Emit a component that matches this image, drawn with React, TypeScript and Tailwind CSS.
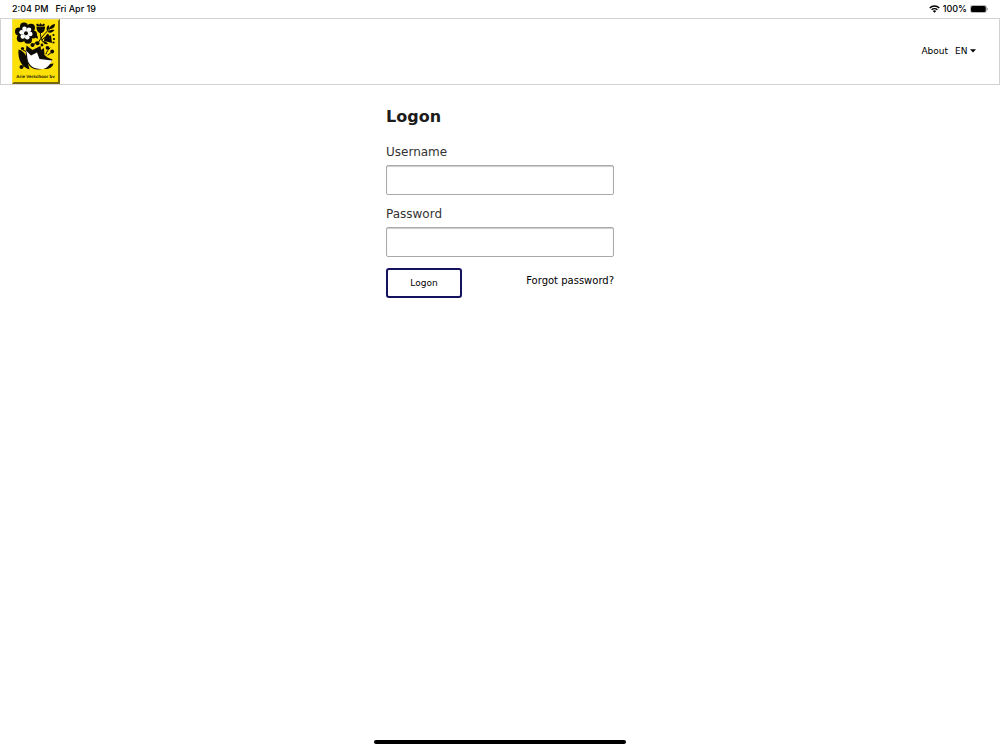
import { useState } from "react";

function Logo() {
  return (
    <svg viewBox="0 0 48 65" className="h-[65px] w-12" role="img" aria-label="Arie Verschoor bv">
      <rect width="48" height="65" fill="#a08c10" />
      <path d="M0 0h48l-2 2H2v61l-2 2z" fill="#f3e04a" />
      <rect x="1" y="1" width="45" height="62" fill="#fde005" />
      <path d="M0 65l2-2h44V2l2-2v65z" fill="#75660f" />
      <g fill="#0d0b04">
        <circle cx="12" cy="7.500" r="4" />
        <circle cx="19" cy="8.800" r="4" />
        <circle cx="21" cy="15.500" r="4" />
        <circle cx="16" cy="20.700" r="4" />
        <circle cx="8.800" cy="19.300" r="4" />
        <circle cx="7" cy="12.500" r="4" />
        <circle cx="14" cy="14" r="7" />
      </g>
      <g fill="#fff">
        <circle cx="12.500" cy="9.900" r="2.300" />
        <circle cx="17" cy="10.800" r="2.300" />
        <circle cx="18.300" cy="15" r="2.300" />
        <circle cx="15.300" cy="18.200" r="2.300" />
        <circle cx="10.800" cy="17.500" r="2.300" />
        <circle cx="9.600" cy="13.200" r="2.300" />
        <circle cx="14" cy="14" r="3" />
      </g>
      <circle cx="14" cy="14.200" r="2" fill="#0d0b04" />
      <g fill="none" stroke="#0d0b04" strokeWidth="1" strokeLinecap="round">
        <path d="M28.500 12C28 17 29 20 31 23" />
        <path d="M41 7C35 12 29 18 26 24M21 27l3-4" />
        <path d="M36 18c-3 0-5 1-6 3M38 29c-2 2-3 3-4 6M40 33l-4 3M11 31l4 2M10 48l3-2" />
      </g>
      <g fill="#0d0b04">
        <path d="M24.500 7.500h8.500c0 4-1.500 6.500-4.300 6.500s-4.200-2.500-4.200-6.500z" />
        <path d="M24 5.500l2-1 1 1.500 1.500-2 1.500 2 1.500-1.500 1.500 1-1 1.500h-7z" />
        <path d="M35 12c-1-3 0-5 1.500-6 1.500 2 1 4-1.500 6zM37 10c1-3 3-4.500 6-5 0 3-2 5-6 5zM35.500 13c2-2 4-2.500 7-2-2 2.500-4 3.500-7 2z" />
        <path d="M36 14.500l1.500 2.500 1.500-1 1 8-3.500-1-4.500-1c0-3 1.500-5.500 4-7.500z" />
        <circle cx="41.500" cy="16" r="1.100" />
        <circle cx="42" cy="20" r="1.100" />
        <circle cx="41.500" cy="23.500" r="1.100" />
        <path d="M25.500 20c-2-1-2.500-3-2-5 2 1 3 3 2 5zM31 22c2 0 4 1 5 3-3 1-4.500-.5-5-3z" />
        <circle cx="20.500" cy="26" r="2" />
        <circle cx="25.500" cy="24.300" r="2" />
        <circle cx="30" cy="26" r="1.400" />
        <circle cx="35.500" cy="28.800" r="1.900" />
        <circle cx="40.200" cy="32.500" r="1.900" />
        <circle cx="10.500" cy="29.500" r="1.600" />
        <circle cx="9.500" cy="48" r="2" />
        <path d="M6.500 30.500c4 1 7 4 8 8l3 12c-7-2-12-9-11-20z" />
        <path d="M14.500 26.500l6 4.500 8-4 .5 4 3-2 .5 7 3 2.500 5 2-3 5c-3 3-7 5-12 5-6 0-11-5-11.500-12.500-.5-3 0-7 .5-11.500z" />
        <path d="M32 50c1-3 4-5 9.500-5.500-1 4-5 6-9.500 5.500z" />
      </g>
      <path d="M14 31.500l5 5 6-3 2.500 6.500 12.500 1.500c-3 6-6 8.500-11 8.500-8 0-12.500-4-13.500-10-.5-3-.5-6-1.500-8.500z" fill="#fff" />
      <text x="23.500" y="58.500" textAnchor="middle" textRendering="geometricPrecision" className="font-['Liberation_Sans_Narrow','Liberation_Sans',Arial,sans-serif] font-bold" fontSize="4.500" fill="#171307">
        Arie Verschoor bv
      </text>
    </svg>
  );
}

function StatusBar() {
  return (
    <div className="flex h-[18px] items-center justify-between px-3 font-[Inter,sans-serif] text-[9px] font-medium">
      <div className="flex gap-[7px]">
        <span>2:04 PM</span>
        <span>Fri Apr 19</span>
      </div>
      <div className="flex items-center gap-[3px]">
        <svg viewBox="0 0 20 15" className="h-2 w-[11px]" fill="none" stroke="#000" strokeWidth="2.600" aria-hidden="true">
          <path d="M1 5.500a13 13 0 0 1 18 0M4.500 9a8 8 0 0 1 11 0" />
          <path d="M6.800 11.200a4.700 4.700 0 0 1 6.400 0L10 14.500z" fill="#000" stroke="none" />
        </svg>
        <span>100%</span>
        <svg viewBox="0 0 18 8" className="h-2 w-[18px]" aria-label="Battery full" role="img">
          <rect x=".4" y=".4" width="16" height="7.200" rx="2.200" fill="#fff" stroke="#999" strokeWidth=".8" />
          <rect x="1" y="1" width="14.800" height="6" rx="1.500" fill="#000" />
          <path d="M17 2.800c1.200.4 1.200 2 0 2.400z" fill="#888" />
        </svg>
      </div>
    </div>
  );
}

const labelClass = "block pb-[2px] text-xs leading-[22px] text-[#333333]";
const fieldClass =
  "h-[30px] w-full rounded-[2px] border border-[#aaaaaa] bg-white px-2 text-xs shadow-[inset_0_1px_1px_#cccccc] outline-none";

export default function App() {
  const [language, setLanguage] = useState("EN");

  return (
    <div className="flex min-h-screen flex-col bg-white font-[Verdana,'DejaVu_Sans',sans-serif] text-black">
      <StatusBar />
      <header className="flex items-center justify-between border border-[#d2d2d2] pl-[11px] pr-[23px]">
        <a href="#home">
          <Logo />
        </a>
        <nav className="flex items-center gap-[7px] text-[9px]">
          <a href="#about">About</a>
          <div className="relative">
            <select
              aria-label="Language"
              value={language}
              onChange={(e) => setLanguage(e.target.value)}
              className="block w-[21px] appearance-none bg-transparent outline-none"
            >
              <option>EN</option>
              <option>NL</option>
              <option>DE</option>
            </select>
            <svg viewBox="0 0 6 4" className="pointer-events-none absolute right-0 top-1 h-1 w-1.5" aria-hidden="true">
              <path d="M0 .3h6L3 3.600z" />
            </svg>
          </div>
        </nav>
      </header>
      <main className="mx-auto w-[228px] flex-1 pt-5">
        <h1 className="text-base font-bold text-[#1c1c1c]">Logon</h1>
        <form onSubmit={(e) => e.preventDefault()} className="pt-3">
          <label htmlFor="username" className={labelClass}>
            Username
          </label>
          <input id="username" type="text" autoComplete="username" className={fieldClass} />
          <div className="pt-2">
            <label htmlFor="password" className={labelClass}>
              Password
            </label>
            <input id="password" type="password" autoComplete="current-password" className={fieldClass} />
          </div>
          <div className="mt-[11px] flex items-start justify-between">
            <button type="submit" className="h-[30px] w-[76px] rounded-[3px] border-2 border-[#14115f] bg-white pt-0.5 text-[9px]">
              Logon
            </button>
            <a href="#forgot" className="text-[10px] leading-[26px]">
              Forgot password?
            </a>
          </div>
        </form>
      </main>
      <div className="mx-auto mb-[6px] h-1 w-[252px] rounded-full bg-black" />
    </div>
  );
}
